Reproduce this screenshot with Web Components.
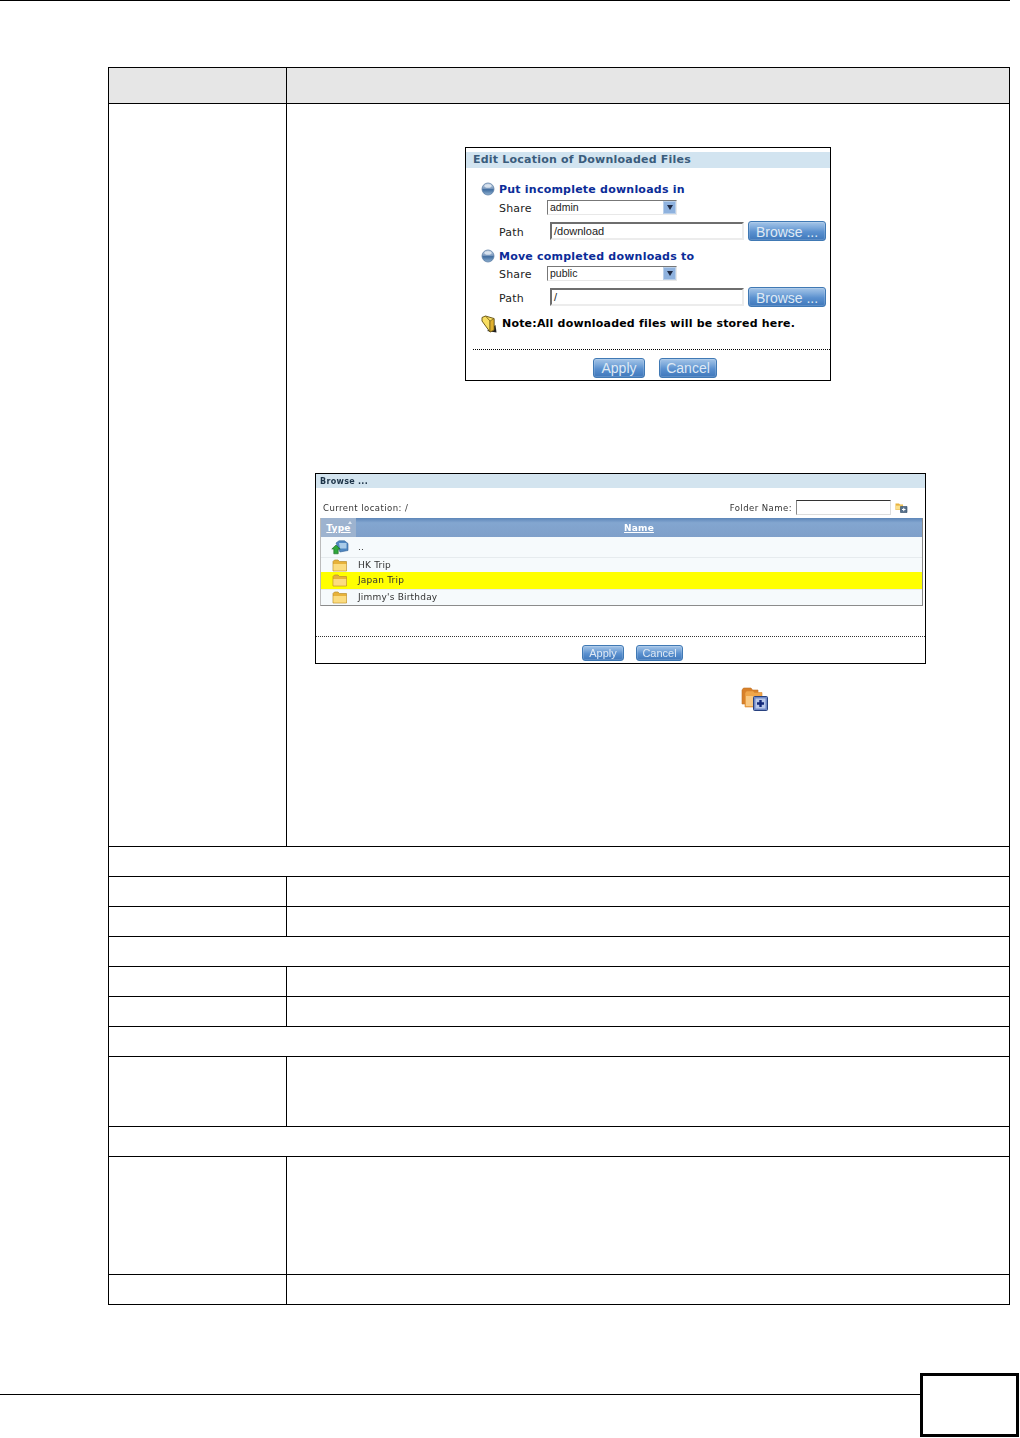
<!DOCTYPE html>
<html>
<head>
<meta charset="utf-8">
<title>Edit Location of Downloaded Files</title>
<style>
  html, body { margin: 0; padding: 0; background: #fff; }
  body { font-family: "Liberation Sans", Arial, sans-serif; }
</style>
</head>
<body>

<manual-page>
  <spec-table>
    <spec-row head></spec-row>
    <spec-row tall>
      <div slot="body" style="display:flex;flex-direction:column;align-items:flex-start">
        <location-dialog style="margin:43px 0 0 178px"></location-dialog>
        <browse-dialog style="margin:92px 0 0 28px"></browse-dialog>
        <ui-icon name="addfolder" size="28" style="margin:23px 0 0 454px"></ui-icon>
      </div>
    </spec-row>
    <spec-row full></spec-row>
    <spec-row></spec-row>
    <spec-row></spec-row>
    <spec-row full></spec-row>
    <spec-row></spec-row>
    <spec-row></spec-row>
    <spec-row full></spec-row>
    <spec-row height="70"></spec-row>
    <spec-row full></spec-row>
    <spec-row height="118"></spec-row>
    <spec-row last></spec-row>
  </spec-table>
</manual-page>

<script>
// small helper, every element gets an open shadow root with its own styles
function shadow(el, html) {
  el.attachShadow({ mode: 'open' }).innerHTML = html;
}

const ICONS = {
  ball: `<svg width="14" height="14" viewBox="0 0 14 14">
      <defs><linearGradient id="b" x1="0" y1="0" x2="0" y2="1">
        <stop offset="0" stop-color="#c9d6e4"/><stop offset=".45" stop-color="#7f9cc0"/>
        <stop offset=".55" stop-color="#3f6c9f"/><stop offset="1" stop-color="#8fb0d0"/></linearGradient></defs>
      <circle cx="7" cy="7" r="6" fill="url(#b)" stroke="#5d7fa6" stroke-width=".8"/>
      <ellipse cx="7" cy="4" rx="3.6" ry="1.8" fill="#e6edf5" opacity=".8"/></svg>`,
  note: `<svg width="16" height="18" viewBox="0 0 16 18">
      <path d="M6 16 15.5 17.5 14.5 10z" fill="#222"/>
      <path d="M1 2.5 4.5 1 13 3.5V15L9 17 1 6z" fill="#f8de62" stroke="#5f4d10" stroke-width=".9"/>
      <path d="M4.5 1 9 6V17" fill="none" stroke="#7d6716" stroke-width=".9"/>
      <path d="M9 6 13 3.5V15L9 17z" fill="#e0b02f" stroke="#5f4d10" stroke-width=".6"/></svg>`,
  folder: `<svg width="16" height="13" viewBox="0 0 16 13">
      <path d="M1 2.5 2.5 1H6L7.5 2.5H14.5V12H1z" fill="#e7b23a" stroke="#b98d2c" stroke-width=".7"/>
      <path d="M1.4 5H14.2V11.6H1.4z" fill="#fbdc80"/></svg>`,
  up: `<svg width="18" height="15" viewBox="0 0 18 15">
      <path d="M5 3 8 .8H13.5L17 3.5V10.5L9 12z" fill="#4f86c0" stroke="#2f5f94" stroke-width=".6"/>
      <path d="M8 3H15.5V8.5H9z" fill="#a9cbe8"/>
      <path d="M.8 9 5 5 9.2 9H7.2V13.8H2.8V9z" fill="#2fa83a" stroke="#17651f" stroke-width=".6"/></svg>`,
  newfolder: `<svg width="13" height="11" viewBox="0 0 13 11">
      <path d="M.5 1.5H4L5 2.5H8V8H.5z" fill="#eab33e"/>
      <path d="M1 3.6H7.5V7.6H1z" fill="#fae08d"/>
      <path d="M5.5 4.5H12V10.5H5.5z" fill="#56708c" stroke="#2c4763" stroke-width=".6"/>
      <path d="M7 7.5H10.5M8.75 5.8V9.2" stroke="#fff" stroke-width="1"/></svg>`,
  addfolder: `<svg width="28" height="25" viewBox="0 0 28 25">
      <path d="M1 3 2.5 1H10L11.5 3H17V17H1z" fill="#d9812a" stroke="#c07226" stroke-width=".6"/>
      <path d="M4 6 5.5 4H12L13.5 5.5H21V20H4z" fill="#f0a64a" stroke="#d98a32" stroke-width=".6"/>
      <path d="M5 9H14V19H5z" fill="#f9c983"/>
      <rect x="12.5" y="9.5" width="14" height="14" rx="1" fill="#6f88c6" stroke="#27417f"/>
      <rect x="14.5" y="11.5" width="10" height="10" fill="#b9c8ea"/>
      <path d="M19.5 13V20M16 16.5H23" stroke="#13297a" stroke-width="2.4"/></svg>`
};

class UiIcon extends HTMLElement {
  connectedCallback() {
    shadow(this, `<style>:host{display:inline-flex;line-height:0;flex:none}</style>${ICONS[this.getAttribute('name')] || ''}`);
  }
}

class ManualPage extends HTMLElement {
  connectedCallback() {
    shadow(this, `<style>
      :host { display: block; width: 1020px; height: 1438px; }
      .rule { height: 1px; width: 1010px; background: #000; margin-bottom: 66px; }
      .table { margin-left: 108px; }
      footer { display: flex; align-items: flex-start; margin-top: 68px; padding-right: 1px; }
      .line { flex: 1; height: 1px; background: #000; margin-top: 21px; }
      .num { width: 99px; height: 64px; border: 3px solid #000; box-sizing: border-box; }
    </style>
    <div class="rule"></div>
    <div class="table"><slot></slot></div>
    <footer><div class="line"></div><div class="num"></div></footer>`);
  }
}

class SpecTable extends HTMLElement {
  connectedCallback() {
    shadow(this, `<style>
      :host { display: block; width: 902px; box-sizing: border-box; border: 1px solid #000; }
    </style><slot></slot>`);
  }
}

class SpecRow extends HTMLElement {
  connectedCallback() {
    const h = this.hasAttribute('head') ? 36 : this.hasAttribute('tall') ? 743 : +(this.getAttribute('height') || 30);
    const full = this.hasAttribute('full');
    shadow(this, `<style>
      :host { display: grid; grid-template-columns: ${full ? '1fr' : '178px 1fr'}; box-sizing: border-box;
              height: ${h - (this.hasAttribute('last') ? 1 : 0)}px; border-bottom: 1px solid #000; }
      :host([last]) { border-bottom: 0; }
      :host([head]) { background: #e6e6e6; }
      .name { border-right: 1px solid #000; }
      .name.off { display: none; }
    </style>
    <div class="name ${full ? 'off' : ''}"><slot name="name"></slot></div>
    <div class="desc"><slot name="body"></slot></div>`);
  }
}

class UiButton extends HTMLElement {
  connectedCallback() {
    shadow(this, `<style>
      :host { display: inline-flex; align-items: center; justify-content: center; box-sizing: border-box;
              height: var(--btn-h, 20px); border: 1px solid #4079b4; border-radius: 3px;
              background: linear-gradient(#a5c5e8 0, #7eaadb 30%, #5a90cf 55%, #3f78bb 100%);
              color: #dfe9f4; font: var(--btn-font, 14px "Liberation Sans", Arial, sans-serif);
              box-shadow: inset 0 0 0 1px rgba(255,255,255,.15); }
    </style><slot></slot>`);
  }
}

class TextField extends HTMLElement {
  connectedCallback() {
    shadow(this, `<style>
      :host { display: block; box-sizing: border-box; background: #fff; color: #222;
              border-style: solid; border-color: #6e6e6e #ececec #ececec #6e6e6e; border-width: 2px;
              font: 11px/14px "Liberation Sans", Arial, sans-serif; padding: 0 2px; white-space: nowrap; }
    </style><slot></slot>`);
  }
}

class ShareSelect extends HTMLElement {
  connectedCallback() {
    shadow(this, `<style>
      :host { display: flex; justify-content: space-between; align-items: center; box-sizing: border-box;
              width: 130px; height: 15px; border-style: solid; border-width: 1px; border-color: #777 #e8e8e8 #e8e8e8 #777;
              font: 10.5px/13px "Liberation Sans", Arial, sans-serif; color: #222; padding-left: 2px; }
      .arrow { width: 13px; height: 13px; background: #8fb2de; border: 1px solid #b9cfe9; box-sizing: border-box;
               display: flex; align-items: center; justify-content: center; }
      .arrow i { width: 0; height: 0; border: 3.5px solid transparent; border-top: 5px solid #1f2a44; border-bottom: 0; }
    </style><slot></slot><div class="arrow"><i></i></div>`);
  }
}

class LocationDialog extends HTMLElement {
  connectedCallback() {
    const section = (title, share, path, cls) => `
      <div class="head ${cls}"><ui-icon name="ball"></ui-icon><span>${title}</span></div>
      <div class="row share"><label>Share</label><share-select>${share}</share-select></div>
      <div class="row path"><label>Path</label><text-field>${path}</text-field><ui-button>Browse ...</ui-button></div>`;
    shadow(this, `<style>
      :host { display: block; box-sizing: border-box; width: 366px; height: 234px; border: 1px solid #000; background: #fff;
              font: 11px/14px "DejaVu Sans", Verdana, sans-serif; color: #222; }
      .title { margin-top: 4px; height: 16px; line-height: 15px; background: #d2e4f0; color: #3a5c7c; font-weight: bold; padding-left: 7px; letter-spacing: .22px; }
      .head { display: flex; align-items: center; height: 14px; padding-left: 15px; gap: 4px; color: #0b2c98; font-weight: bold; letter-spacing: .22px; }
      .head span { padding-top: 2px; }
      .head.one { margin-top: 14px; }
      .head.two { margin-top: 7px; }
      .head.two span { padding-top: 4px; }
      .head.two ui-icon { margin-top: 2px; }
      .row { display: flex; align-items: center; padding-left: 33px; }
      .row label { letter-spacing: .2px; padding-top: 2px; }
      .share { margin-top: 4px; height: 15px; }
      .share label { width: 48px; }
      .path { margin-top: 6px; height: 20px; }
      .path label { width: 51px; padding-top: 3px; }
      text-field { width: 194px; height: 18px; margin-right: 4px; }
      .path ui-button { width: 78px; padding-top: 1px; }
      .note { display: flex; align-items: center; margin-top: 8px; height: 18px; padding-left: 15px; gap: 5px; font-weight: bold; color: #000; letter-spacing: .2px; }
      .dots { margin: 16px 0 0 7px; border-top: 1px dotted #000; }
      .actions { display: flex; justify-content: center; gap: 14px; margin-top: 8px; padding-left: 14px; }
      .actions ui-button:first-child { width: 52px; }
      .actions ui-button:last-child { width: 58px; }
    </style>
    <div class="title">Edit Location of Downloaded Files</div>
    ${section('Put incomplete downloads in', 'admin', '/download', 'one')}
    ${section('Move completed downloads to', 'public', '/', 'two')}
    <div class="note"><ui-icon name="note"></ui-icon><span>Note:All downloaded files will be stored here.</span></div>
    <div class="dots"></div>
    <div class="actions"><ui-button>Apply</ui-button><ui-button>Cancel</ui-button></div>`);
  }
}

class BrowseDialog extends HTMLElement {
  connectedCallback() {
    const rows = [['up', '..', 'a', 20], ['folder', 'HK Trip', '', 15], ['folder', 'Japan Trip', 'sel', 17], ['folder', "Jimmy's Birthday", '', 15]];
    shadow(this, `<style>
      :host { display: block; box-sizing: border-box; width: 611px; height: 191px; border: 1px solid #000; background: #fff;
              font: 9px/12px "DejaVu Sans", Verdana, sans-serif; color: #333; --btn-h: 16px; --btn-font: 11px "Liberation Sans", Arial, sans-serif; }
      .inner { filter: blur(.35px); }
      .title { height: 14px; line-height: 15px; background: #d3e4ef; font-weight: bold; padding-left: 4px; color: #1d3347; font-size: 8px; letter-spacing: .3px; }
      .top { display: flex; align-items: center; height: 15px; margin-top: 12px; padding: 0 17px 0 7px; }
      .top .grow { flex: 1; letter-spacing: .45px; font-size: 8.5px; }
      .top span:not(.grow) { font-size: 8.5px; margin-right: 4px; letter-spacing: .45px; }
      .top text-field { width: 95px; height: 15px; border-width: 1px; border-color: #333 #ddd #ddd #888; margin-right: 4px; }
      .list { box-sizing: border-box; width: 603px; height: 88px; margin: 3px 0 0 4px; border: 1px solid #8b8b8b; border-top: 0; border-left-color: #bbb; background: #f6fafc; }
      .thead { display: flex; height: 19px; background: linear-gradient(#5d86b8 0, #83a6d0 25%, #7f9fc9 100%); color: #fff; font-weight: bold; line-height: 21px; letter-spacing: .2px; text-decoration: underline; }
      .thead .type { width: 35px; text-align: center; background: #9db3cf; position: relative; }
      .thead .type::after { content: ""; position: absolute; left: 27px; top: 3px; border: 2.5px solid transparent; border-bottom: 3px solid #dfe8f2; border-top: 0; }
      .thead .name { flex: 1; text-align: center; }
      .tr { display: flex; align-items: center; box-sizing: border-box; border-top: 1px solid #e6ebee; letter-spacing: .2px; }
      .tr span { margin-top: -1px; }
      .tr.a { border-top: 0; }
      .tr.sel { background: #ff0; border: 0; }
      .tr .ic { width: 37px; display: flex; justify-content: center; padding-left: 1px; box-sizing: border-box; }
      .dots { margin-top: 30px; border-top: 1px dotted #333; }
      .actions { display: flex; justify-content: center; gap: 12px; margin-top: 8px; padding-left: 24px; }
      .actions ui-button:first-child { width: 42px; }
      .actions ui-button:last-child { width: 47px; }
    </style>
    <div class="inner">
      <div class="title">Browse ...</div>
      <div class="top"><span class="grow">Current location: /</span><span>Folder Name:</span><text-field></text-field><ui-icon name="newfolder"></ui-icon></div>
      <div class="list">
        <div class="thead"><div class="type">Type</div><div class="name">Name</div></div>
        ${rows.map(r => `<div class="tr ${r[2]}" style="height:${r[3]}px"><div class="ic"><ui-icon name="${r[0]}"></ui-icon></div><span>${r[1]}</span></div>`).join('')}
      </div>
      <div class="dots"></div>
      <div class="actions"><ui-button>Apply</ui-button><ui-button>Cancel</ui-button></div>
    </div>`);
  }
}

customElements.define('ui-icon', UiIcon);
customElements.define('manual-page', ManualPage);
customElements.define('spec-table', SpecTable);
customElements.define('spec-row', SpecRow);
customElements.define('ui-button', UiButton);
customElements.define('text-field', TextField);
customElements.define('share-select', ShareSelect);
customElements.define('location-dialog', LocationDialog);
customElements.define('browse-dialog', BrowseDialog);
</script>
</body>
</html>
